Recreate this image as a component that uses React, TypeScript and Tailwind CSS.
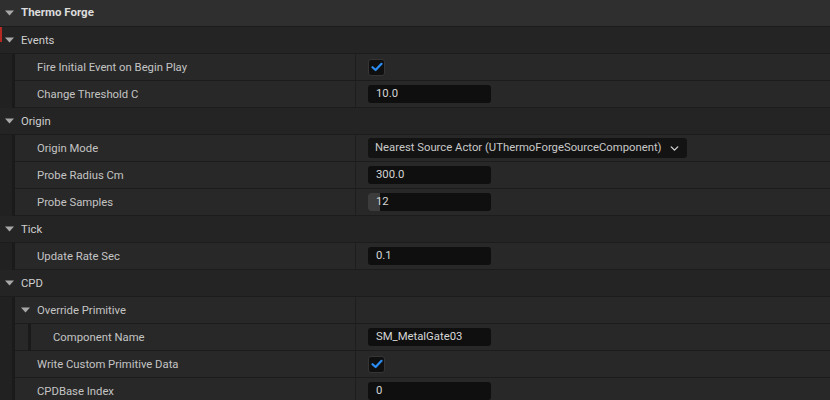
import { ChevronDown } from "lucide-react";

type Row =
  | { kind: "header"; label: string }
  | { kind: "cat"; label: string }
  | { kind: "sub"; label: string }
  | { kind: "prop"; label: string; depth?: number; value: Value };

type Value =
  | { type: "check" }
  | { type: "text"; text: string; slider?: boolean }
  | { type: "combo"; text: string };

const ROWS: Row[] = [
  { kind: "header", label: "Thermo Forge" },
  { kind: "cat", label: "Events" },
  { kind: "prop", label: "Fire Initial Event on Begin Play", value: { type: "check" } },
  { kind: "prop", label: "Change Threshold C", value: { type: "text", text: "10.0" } },
  { kind: "cat", label: "Origin" },
  { kind: "prop", label: "Origin Mode", value: { type: "combo", text: "Nearest Source Actor (UThermoForgeSourceComponent)" } },
  { kind: "prop", label: "Probe Radius Cm", value: { type: "text", text: "300.0" } },
  { kind: "prop", label: "Probe Samples", value: { type: "text", text: "12", slider: true } },
  { kind: "cat", label: "Tick" },
  { kind: "prop", label: "Update Rate Sec", value: { type: "text", text: "0.1" } },
  { kind: "cat", label: "CPD" },
  { kind: "sub", label: "Override Primitive" },
  { kind: "prop", label: "Component Name", depth: 2, value: { type: "text", text: "SM_MetalGate03" } },
  { kind: "prop", label: "Write Custom Primitive Data", value: { type: "check" } },
  { kind: "prop", label: "CPDBase Index", value: { type: "text", text: "0" } },
];

function Arrow() {
  return (
    <svg width="9" height="6" viewBox="0 0 9 6" className="shrink-0">
      <path d="M0 0.5 L9 0.5 L4.5 5.5 Z" fill="#a8a8a8" />
    </svg>
  );
}

function Gutter() {
  return (
    <div className="flex h-full shrink-0">
      <div className="w-[12px] bg-[#212121]" />
      <div className="w-[3px] bg-[#1a1a1a]" />
    </div>
  );
}

function ValueWidget({ v }: { v: Value }) {
  if (v.type === "check") {
    return (
      <div className="w-[17px] h-[17px] rounded-[3px] bg-[#0f0f0f] border border-[#353535] flex items-center justify-center">
        <svg width="12" height="10" viewBox="0 0 12 10">
          <path d="M1.5 5.2 L4.6 8 L10.5 1.8" fill="none" stroke="#2b8cf2" strokeWidth="2.2" strokeLinecap="round" strokeLinejoin="round" />
        </svg>
      </div>
    );
  }
  if (v.type === "combo") {
    return (
      <div className="w-[319px] h-[20px] shrink-0 rounded-[3px] bg-[#131313] flex items-center pl-[7px] gap-[6px] text-[#c8c8c8]">
        <span className="whitespace-nowrap">{v.text}</span>
        <ChevronDown size={13} strokeWidth={2.6} className="text-[#cfcfcf] shrink-0" />
      </div>
    );
  }
  return (
    <div className="relative w-[123px] h-[18px] rounded-[3px] bg-[#0f0f0f] flex items-center pl-[8px] text-[#d6d6d6]">
      {v.slider && <div className="absolute left-0 top-0 h-full w-[12px] rounded-l-[3px] bg-[#3c3c3c]" />}
      <span className="relative">{v.text}</span>
    </div>
  );
}

function RowView({ row }: { row: Row }) {
  if (row.kind === "header") {
    return (
      <div className="h-[27px] flex items-center bg-[#2f2f2f] border-b border-[#1c1c1c] pl-[5px] gap-[7px]">
        <Arrow />
        <span className="font-bold text-[#dcdcdc] text-[11.5px]">{row.label}</span>
      </div>
    );
  }
  if (row.kind === "cat") {
    return (
      <div className="h-[27px] flex items-center bg-[#242424] border-b border-[#1c1c1c] pl-[5px] gap-[7px]">
        <Arrow />
        <span className="text-[#cfcfcf] pt-[1px]">{row.label}</span>
      </div>
    );
  }
  if (row.kind === "sub") {
    return (
      <div className="h-[27px] flex">
        <Gutter />
        <div className="flex-1 flex border-b border-[#1c1c1c] bg-[#282828]">
          <div className="w-[341px] flex items-center gap-[7px] pl-[6px] border-r border-[#1e1e1e]">
            <Arrow />
            <span className="text-[#c4c4c4] pt-[1px]">{row.label}</span>
          </div>
          <div className="flex-1" />
        </div>
      </div>
    );
  }
  const nested = row.depth === 2;
  return (
    <div className="h-[27px] flex">
      <Gutter />
      {nested && (
        <div className="flex h-full shrink-0">
          <div className="w-[13px] bg-[#282828] border-b border-[#1c1c1c]" />
          <div className="w-[3px] bg-[#1a1a1a]" />
        </div>
      )}
      <div className="flex-1 flex border-b border-[#1c1c1c] bg-[#282828]">
        <div
          className={
            nested
              ? "w-[325px] shrink-0 flex items-center pl-[22px] border-r border-[#1e1e1e]"
              : "w-[341px] shrink-0 flex items-center pl-[22px] border-r border-[#1e1e1e]"
          }
        >
          <span className="text-[#c4c4c4] whitespace-nowrap pt-[1px]">{row.label}</span>
        </div>
        <div className="flex-1 flex items-center pl-[12px]">
          <ValueWidget v={row.value} />
        </div>
      </div>
    </div>
  );
}

export default function App() {
  return (
    <div
      className="relative w-[830px] h-[400px] overflow-hidden bg-[#242424] text-[11.3px] leading-none"
      style={{ fontFamily: "Roboto, 'Noto Sans', sans-serif" }}
    >
      {ROWS.map((r, i) => (
        <RowView key={i} row={r} />
      ))}
      {/* selection marker */}
      <div className="absolute left-0 top-[27px] w-[2px] h-[15px] bg-[#b42a22]" />
    </div>
  );
}
